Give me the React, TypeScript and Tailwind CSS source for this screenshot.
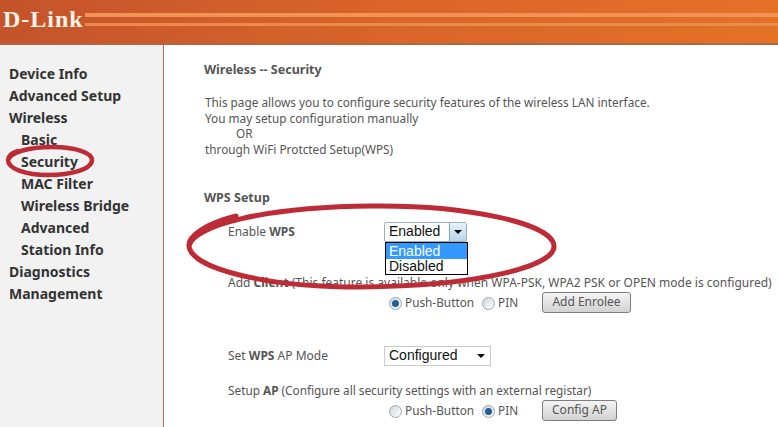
const menu = [
  { label: "Device Info" },
  { label: "Advanced Setup" },
  { label: "Wireless" },
  { label: "Basic", sub: true },
  { label: "Security", sub: true },
  { label: "MAC Filter", sub: true },
  { label: "Wireless Bridge", sub: true },
  { label: "Advanced", sub: true },
  { label: "Station Info", sub: true },
  { label: "Diagnostics" },
  { label: "Management" },
];

function Radio({ checked }: { checked?: boolean }) {
  return (
    <span className="w-[13px] h-[13px] rounded-full border border-[#9aa8b4] bg-gradient-to-br from-[#d4d4d4] to-[#ffffff] flex items-center justify-center shrink-0">
      {checked && <span className="w-[7px] h-[7px] rounded-full bg-[#1f5f96]" />}
    </span>
  );
}

function RadioRow({ pin, button, buttonClass }: { pin?: boolean; button: string; buttonClass: string }) {
  return (
    <div className="flex items-center">
      <div className="w-[153px] ml-[184px] flex items-center gap-[3px] pt-[2px] text-[11.8px]">
        <Radio checked={!pin} />
        <span className="w-[74px]">Push-Button</span>
        <Radio checked={pin} />
        <span>PIN</span>
      </div>
      <button
        type="button"
        className={`h-[21px] rounded-[3px] border border-[#7d7d7d] bg-gradient-to-b from-[#f4f4f4] to-[#d2d2d2] text-[#555] text-[12px] ${buttonClass}`}
      >
        {button}
      </button>
    </div>
  );
}

// hand-drawn red circles over the page
function Scribbles() {
  return (
    <svg className="absolute inset-0 pointer-events-none" width="778" height="427" fill="none" stroke="#bd2b36" strokeLinecap="round">
      <path
        strokeWidth="5"
        d="M189 246C193 226 262 207 372 206C470 205 553 224 554 246C555 266 480 286 360 287C262 287 191 268 189 246C188 236 205 224 236 216"
      />
      <path
        strokeWidth="4.5"
        d="M8 160C10 152 30 147 52 147C76 147 92 153 92 160C92 169 72 175 48 175C26 175 8 169 8 160C8 156 12 153 18 151"
      />
    </svg>
  );
}

export default function App() {
  return (
    <div className="relative w-[778px] h-[427px] overflow-hidden bg-white font-['Noto_Sans',sans-serif] text-[12px] text-[#555]">
      {/* orange banner */}
      <div className="h-[45px] flex items-center pl-[3px] bg-gradient-to-r from-[#c5532b] via-[#d9652a] to-[#e37126] border-b-2 border-b-[#b0683c]">
        <span className="font-['Liberation_Serif',serif] font-bold text-[24px] leading-none text-[#fdf3e6] tracking-[1px] pb-[5px]">
          D-Link
        </span>
        <div className="flex-1 ml-[1px] flex flex-col gap-[6px] pb-[4px]">
          <div className="h-[4px] bg-[#ef9455]" />
          <div className="h-[3px] bg-[#ec8a4c]" />
        </div>
      </div>

      <div className="flex h-[382px]">
        {/* left menu */}
        <nav className="w-[164px] shrink-0 bg-[#f2f2f2] border-r border-r-[#a5705a] pt-[18px] pl-[9px] font-bold text-[14px] text-[#333]">
          {menu.map((item) => (
            <div key={item.label} className={`h-[22px] leading-[22px] ${item.sub ? "pl-[12px]" : ""}`}>
              {item.label}
            </div>
          ))}
        </nav>

        {/* page content */}
        <main className="flex-1 pl-[41px] pt-[17px]">
          <div className="h-4 leading-4 font-bold text-[12.5px] -ml-px">Wireless -- Security</div>

          <div className="mt-[17px] leading-[15.7px] text-[11.8px]">
            <div>This page allows you to configure security features of the wireless LAN interface.</div>
            <div>You may setup configuration manually</div>
            <div className="pl-[31px]">OR</div>
            <div>through WiFi Protcted Setup(WPS)</div>
          </div>

          <div className="mt-[32px] h-4 leading-4 font-bold text-[12.5px] -ml-px">WPS Setup</div>

          <div className="mt-[16px] h-[20px] flex items-center">
            <div className="w-[179px] pl-[23px]">
              Enable <b>WPS</b>
            </div>
            <div className="relative w-[83px] h-[20px] bg-white border border-[#9fb0bb] flex items-center rounded-[2px]">
              <span className="flex-1 pl-[4px] font-['Liberation_Sans',sans-serif] text-[14px] text-[#111]">Enabled</span>
              <span className="w-[17px] h-[18px] border-l border-l-[#7ea0b8] bg-gradient-to-b from-[#e6f3fb] to-[#b5d6ea] flex items-center justify-center">
                <span className="w-0 h-0 border-x-[4px] border-x-transparent border-t-[4px] border-t-black" />
              </span>
              {/* open list */}
              <div className="absolute left-0 top-[19px] w-[83px] border border-black bg-white font-['Liberation_Sans',sans-serif] text-[14px] text-[#111] z-10">
                <div className="h-[16px] leading-[16px] pl-[3px] bg-[#3399ff] text-white">Enabled</div>
                <div className="h-[15px] leading-[15px] pl-[3px]">Disabled</div>
              </div>
            </div>
          </div>

          <div className="mt-[33px] h-4 leading-4 pl-[23px] whitespace-nowrap">
            Add <b>Client</b> (This feature is available only when WPA-PSK, WPA2 PSK or OPEN mode is configured)
          </div>

          <div className="mt-px">
            <RadioRow button="Add Enrolee" buttonClass="w-[89px]" />
          </div>

          <div className="mt-[33px] h-[20px] flex items-center">
            <div className="w-[179px] pl-[23px]">
              Set <b>WPS</b> AP Mode
            </div>
            <div className="w-[107px] h-[20px] bg-white border border-[#ccc] flex items-center">
              <span className="flex-1 pl-[4px] font-['Liberation_Sans',sans-serif] text-[14px] text-[#111]">Configured</span>
              <span className="mr-[5px] w-0 h-0 border-x-[4px] border-x-transparent border-t-[4px] border-t-black" />
            </div>
          </div>

          <div className="mt-[16px] h-4 leading-4 pl-[23px] whitespace-nowrap text-[11.8px]">
            Setup <b>AP</b> (Configure all security settings with an external registar)
          </div>

          <div className="mt-[2px]">
            <RadioRow pin button="Config AP" buttonClass="w-[75px]" />
          </div>
        </main>
      </div>

      <Scribbles />
    </div>
  );
}
